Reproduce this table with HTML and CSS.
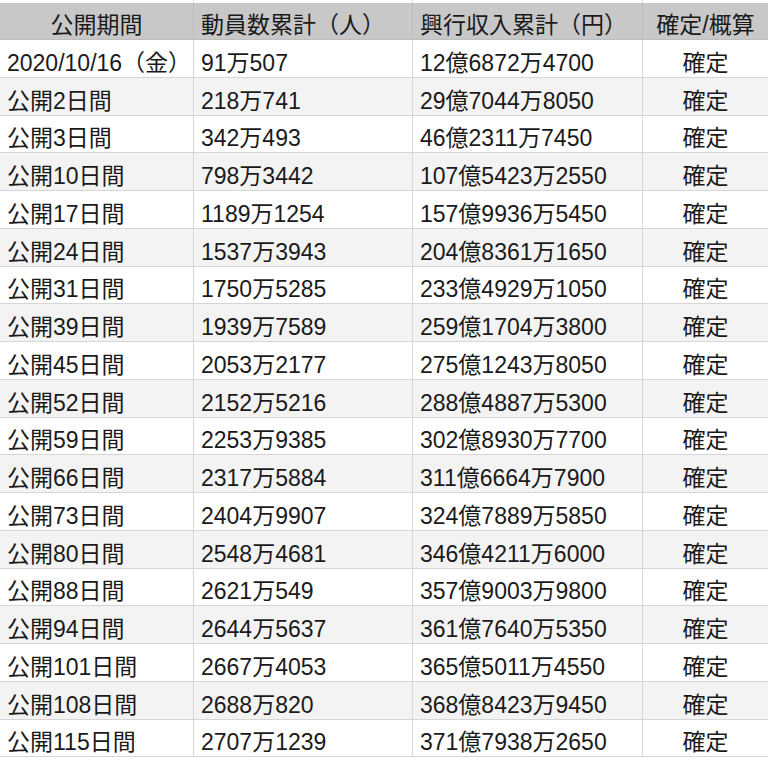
FILE: index.html
```html
<!DOCTYPE html>
<html lang="ja">
<head>
<meta charset="utf-8">
<title>興行収入</title>
<link rel="stylesheet" href="styles.css">
</head>
<body>
<div class="sheet">
  <div class="row strip"><div class="cell"></div><div class="cell"></div><div class="cell"></div><div class="cell"></div></div>
  <div class="row head">
    <div class="cell c">公開期間</div><div class="cell">動員数累計（人）</div><div class="cell">興行収入累計（円）</div><div class="cell c">確定/概算</div>
  </div>
  <div class="row"><div class="cell">2020/10/16（金）</div><div class="cell">91万507</div><div class="cell">12億6872万4700</div><div class="cell c">確定</div></div>
  <div class="row alt"><div class="cell">公開2日間</div><div class="cell">218万741</div><div class="cell">29億7044万8050</div><div class="cell c">確定</div></div>
  <div class="row"><div class="cell">公開3日間</div><div class="cell">342万493</div><div class="cell">46億2311万7450</div><div class="cell c">確定</div></div>
  <div class="row alt"><div class="cell">公開10日間</div><div class="cell">798万3442</div><div class="cell">107億5423万2550</div><div class="cell c">確定</div></div>
  <div class="row"><div class="cell">公開17日間</div><div class="cell">1189万1254</div><div class="cell">157億9936万5450</div><div class="cell c">確定</div></div>
  <div class="row alt"><div class="cell">公開24日間</div><div class="cell">1537万3943</div><div class="cell">204億8361万1650</div><div class="cell c">確定</div></div>
  <div class="row"><div class="cell">公開31日間</div><div class="cell">1750万5285</div><div class="cell">233億4929万1050</div><div class="cell c">確定</div></div>
  <div class="row alt"><div class="cell">公開39日間</div><div class="cell">1939万7589</div><div class="cell">259億1704万3800</div><div class="cell c">確定</div></div>
  <div class="row"><div class="cell">公開45日間</div><div class="cell">2053万2177</div><div class="cell">275億1243万8050</div><div class="cell c">確定</div></div>
  <div class="row alt"><div class="cell">公開52日間</div><div class="cell">2152万5216</div><div class="cell">288億4887万5300</div><div class="cell c">確定</div></div>
  <div class="row"><div class="cell">公開59日間</div><div class="cell">2253万9385</div><div class="cell">302億8930万7700</div><div class="cell c">確定</div></div>
  <div class="row alt"><div class="cell">公開66日間</div><div class="cell">2317万5884</div><div class="cell">311億6664万7900</div><div class="cell c">確定</div></div>
  <div class="row"><div class="cell">公開73日間</div><div class="cell">2404万9907</div><div class="cell">324億7889万5850</div><div class="cell c">確定</div></div>
  <div class="row alt"><div class="cell">公開80日間</div><div class="cell">2548万4681</div><div class="cell">346億4211万6000</div><div class="cell c">確定</div></div>
  <div class="row"><div class="cell">公開88日間</div><div class="cell">2621万549</div><div class="cell">357億9003万9800</div><div class="cell c">確定</div></div>
  <div class="row alt"><div class="cell">公開94日間</div><div class="cell">2644万5637</div><div class="cell">361億7640万5350</div><div class="cell c">確定</div></div>
  <div class="row"><div class="cell">公開101日間</div><div class="cell">2667万4053</div><div class="cell">365億5011万4550</div><div class="cell c">確定</div></div>
  <div class="row alt"><div class="cell">公開108日間</div><div class="cell">2688万820</div><div class="cell">368億8423万9450</div><div class="cell c">確定</div></div>
  <div class="row"><div class="cell">公開115日間</div><div class="cell">2707万1239</div><div class="cell">371億7938万2650</div><div class="cell c">確定</div></div>
</div>
</body>
</html>
```

FILE: styles.css
```css
html, body {
  margin: 0;
  padding: 0;
  background: #ffffff;
}
body {
  font-family: "Liberation Sans", "Noto Sans CJK JP", sans-serif;
  font-size: 23px;
  color: #1a1a1a;
  width: 768px;
  height: 760px;
  overflow: hidden;
}
.sheet {
  display: flex;
  flex-direction: column;
}
.row {
  display: grid;
  grid-template-columns: 194px 219px 230px 125px;
  height: 37.75px;
}
.row.strip {
  height: 3px;
}
.row.head {
  height: 37px;
  background: #c8c8c8;
}
.row.alt {
  background: #f3f3f3;
}
.cell {
  box-sizing: border-box;
  border-right: 1px solid #d6d6d6;
  border-bottom: 1px solid #d6d6d6;
  padding: 0 0 3px 7px;
  line-height: 22px;
  display: flex;
  align-items: flex-end;
  white-space: nowrap;
  overflow: hidden;
}
.head .cell {
  border-right-color: #bdbdbd;
  border-bottom-color: #bdbdbd;
}
.cell:last-child {
  border-right: none;
}
.cell.c {
  justify-content: center;
  padding-left: 0;
}
```
